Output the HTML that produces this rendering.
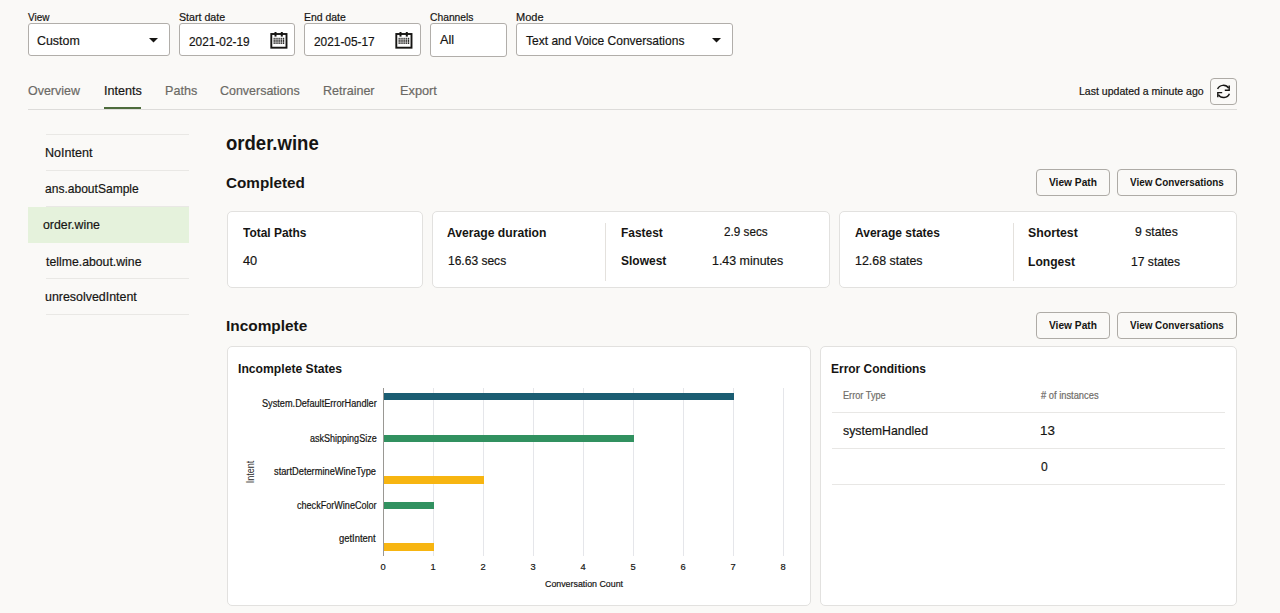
<!DOCTYPE html>
<html><head><meta charset="utf-8">
<style>
*{box-sizing:border-box;margin:0;padding:0}
html,body{width:1280px;height:613px;overflow:hidden;background:#faf9f7;font-family:"Liberation Sans",sans-serif;color:#161513}
.nt{position:absolute}
.t{position:absolute;white-space:nowrap;line-height:1;transform-origin:0 0}
.box{top:23px;height:33px;background:#fff;border:1px solid #b1aeaa;border-radius:3px}
.hr{height:1px;background:#e9e8e5}
.btn{height:27px;border:1px solid #aeaba6;border-radius:4px}
.card{background:#fff;border:1px solid #e2e1df;border-radius:5px}
.grid{top:388px;width:1px;height:168px;background:#e5e6ea}
</style></head><body>
<!-- filter bar -->
<div class="nt box" style="left:28px;width:142px"></div>
<svg class="nt" style="left:149px;top:38px" width="9" height="5"><path d="M0 0H9L4.5 4.5Z" fill="#161513"/></svg>
<div class="nt box" style="left:179px;width:116px"></div>
<div class="nt box" style="left:304px;width:117px"></div>
<div class="nt box" style="left:430px;width:77px;height:34px"></div>
<div class="nt box" style="left:516px;width:217px"></div>
<svg class="nt" style="left:712px;top:38px" width="9" height="5"><path d="M0 0H9L4.5 4.5Z" fill="#161513"/></svg>
<svg class="nt" style="left:270px;top:32px" width="18" height="18" viewBox="0 0 18 18"><rect x="1.3" y="2" width="15.2" height="13.7" fill="none" stroke="#161513" stroke-width="1.9"/><rect x="4.5" y="0" width="2" height="4.6" fill="#161513"/><rect x="10.8" y="0" width="2" height="4.6" fill="#161513"/><g fill="#161513"><rect x="3.60" y="5.8" width="1.1" height="6.2"/><rect x="5.50" y="5.8" width="1.1" height="6.2"/><rect x="7.40" y="5.8" width="1.1" height="6.2"/><rect x="9.30" y="5.8" width="1.1" height="6.2"/><rect x="11.20" y="5.8" width="1.1" height="6.2"/><rect x="13.10" y="5.8" width="1.1" height="6.2"/></g><g fill="#fff"><rect x="3" y="7.5" width="12" height="0.5" opacity="0.6"/><rect x="3" y="9.9" width="12" height="0.5" opacity="0.6"/></g></svg>
<svg class="nt" style="left:395px;top:32px" width="18" height="18" viewBox="0 0 18 18"><rect x="1.3" y="2" width="15.2" height="13.7" fill="none" stroke="#161513" stroke-width="1.9"/><rect x="4.5" y="0" width="2" height="4.6" fill="#161513"/><rect x="10.8" y="0" width="2" height="4.6" fill="#161513"/><g fill="#161513"><rect x="3.60" y="5.8" width="1.1" height="6.2"/><rect x="5.50" y="5.8" width="1.1" height="6.2"/><rect x="7.40" y="5.8" width="1.1" height="6.2"/><rect x="9.30" y="5.8" width="1.1" height="6.2"/><rect x="11.20" y="5.8" width="1.1" height="6.2"/><rect x="13.10" y="5.8" width="1.1" height="6.2"/></g><g fill="#fff"><rect x="3" y="7.5" width="12" height="0.5" opacity="0.6"/><rect x="3" y="9.9" width="12" height="0.5" opacity="0.6"/></g></svg>

<!-- tabs -->
<div class="nt" style="left:28px;top:109px;width:1209px;height:1px;background:#dddcda"></div>
<div class="nt" style="left:104px;top:107px;width:37px;height:2px;background:#4d6b3c"></div>
<div class="nt btn" style="left:1210px;top:78px;width:27px;height:27px"></div>
<svg class="nt" style="left:1216px;top:84px" width="15" height="15" viewBox="0 0 15 15"><g fill="none" stroke="#161513" stroke-width="1.4"><path d="M1.6 5.0A6 5.4 0 0 1 12.6 4.2"/><path d="M13.2 1.6V6.2H8.8"/><path d="M13.4 9.8A6 5.4 0 0 1 2.4 10.6"/><path d="M1.8 13.2V8.6H6.2"/></g></svg>

<!-- left list -->
<div class="nt hr" style="left:46px;top:134px;width:143px"></div>
<div class="nt hr" style="left:46px;top:170px;width:143px"></div>
<div class="nt hr" style="left:46px;top:206px;width:143px"></div>
<div class="nt" style="left:28px;top:207px;width:161px;height:36px;background:#e5f2dc"></div>
<div class="nt hr" style="left:46px;top:278px;width:143px"></div>
<div class="nt hr" style="left:46px;top:314px;width:143px"></div>

<!-- completed -->
<div class="nt btn" style="left:1036px;top:169px;width:74px"></div>
<div class="nt btn" style="left:1117px;top:169px;width:120px"></div>
<div class="nt card" style="left:227px;top:211px;width:196px;height:77px"></div>
<div class="nt card" style="left:432px;top:211px;width:398px;height:77px"></div>
<div class="nt card" style="left:839px;top:211px;width:398px;height:77px"></div>
<div class="nt" style="left:605px;top:223px;width:1px;height:58px;background:#e4e1dd"></div>
<div class="nt" style="left:1013px;top:223px;width:1px;height:58px;background:#e4e1dd"></div>

<!-- incomplete -->
<div class="nt btn" style="left:1036px;top:312px;width:74px"></div>
<div class="nt btn" style="left:1117px;top:312px;width:120px"></div>
<div class="nt card" style="left:227px;top:346px;width:584px;height:260px"></div>
<div class="nt card" style="left:820px;top:346px;width:417px;height:260px"></div>

<div class="nt grid" style="left:433px"></div>
<div class="nt grid" style="left:483px"></div>
<div class="nt grid" style="left:533px"></div>
<div class="nt grid" style="left:583px"></div>
<div class="nt grid" style="left:633px"></div>
<div class="nt grid" style="left:683px"></div>
<div class="nt grid" style="left:733px"></div>
<div class="nt grid" style="left:783px"></div>
<div class="nt" style="left:383px;top:388px;width:1px;height:168px;background:#9a9894"></div>
<div class="nt" style="left:384px;top:393px;width:350px;height:7px;background:#1b5d72"></div>
<div class="nt" style="left:384px;top:435px;width:250px;height:7px;background:#319160"></div>
<div class="nt" style="left:384px;top:476px;width:100px;height:8px;background:#f7b511"></div>
<div class="nt" style="left:384px;top:502px;width:50px;height:7px;background:#319160"></div>
<div class="nt" style="left:384px;top:543px;width:50px;height:8px;background:#f7b511"></div>
<div class="nt" style="left:234px;top:466px;width:34px;height:12px;font-size:10px;line-height:12px;text-align:center;color:#2b2a28;transform:rotate(-90deg) scaleX(0.9)">Intent</div>

<div class="nt" style="left:832px;top:412px;width:393px;height:1px;background:#e8e7e5"></div>
<div class="nt" style="left:832px;top:448px;width:393px;height:1px;background:#e8e7e5"></div>
<div class="nt" style="left:832px;top:484px;width:393px;height:1px;background:#e8e7e5"></div>

<div class="t" style="left:28.00px;top:12.00px;font-size:11px;-webkit-text-stroke:0.2px currentColor;transform:scaleX(0.9077);">View</div>
<div class="t" style="left:179.00px;top:12.00px;font-size:11px;-webkit-text-stroke:0.2px currentColor;transform:scaleX(0.9679);">Start date</div>
<div class="t" style="left:304.00px;top:12.00px;font-size:11px;-webkit-text-stroke:0.2px currentColor;transform:scaleX(0.9501);">End date</div>
<div class="t" style="left:430.00px;top:12.00px;font-size:11px;-webkit-text-stroke:0.2px currentColor;transform:scaleX(0.9362);">Channels</div>
<div class="t" style="left:516.00px;top:12.00px;font-size:11px;-webkit-text-stroke:0.2px currentColor;transform:scaleX(1.0014);">Mode</div>
<div class="t" style="left:37.00px;top:34.00px;font-size:13px;-webkit-text-stroke:0.2px currentColor;transform:scaleX(0.9537);">Custom</div>
<div class="t" style="left:189.00px;top:35.00px;font-size:13px;-webkit-text-stroke:0.2px currentColor;transform:scaleX(0.9132);">2021-02-19</div>
<div class="t" style="left:314.00px;top:35.00px;font-size:13px;-webkit-text-stroke:0.2px currentColor;transform:scaleX(0.9132);">2021-05-17</div>
<div class="t" style="left:440.00px;top:33.00px;font-size:13px;-webkit-text-stroke:0.2px currentColor;transform:scaleX(0.9736);">All</div>
<div class="t" style="left:526.00px;top:34.00px;font-size:13px;-webkit-text-stroke:0.2px currentColor;transform:scaleX(0.9248);">Text and Voice Conversations</div>
<div class="t" style="left:28.00px;top:84.00px;font-size:13px;-webkit-text-stroke:0.2px currentColor;color:#6b6965;transform:scaleX(0.9575);">Overview</div>
<div class="t" style="left:104.00px;top:84.00px;font-size:13px;-webkit-text-stroke:0.2px currentColor;transform:scaleX(0.9689);">Intents</div>
<div class="t" style="left:165.00px;top:84.00px;font-size:13px;-webkit-text-stroke:0.2px currentColor;color:#6b6965;transform:scaleX(0.9691);">Paths</div>
<div class="t" style="left:220.00px;top:84.00px;font-size:13px;-webkit-text-stroke:0.2px currentColor;color:#6b6965;transform:scaleX(0.9586);">Conversations</div>
<div class="t" style="left:323.00px;top:84.00px;font-size:13px;-webkit-text-stroke:0.2px currentColor;color:#6b6965;transform:scaleX(0.9638);">Retrainer</div>
<div class="t" style="left:400.00px;top:84.00px;font-size:13px;-webkit-text-stroke:0.2px currentColor;color:#6b6965;transform:scaleX(0.9819);">Export</div>
<div class="t" style="left:1079.00px;top:86.00px;font-size:11px;-webkit-text-stroke:0.2px currentColor;transform:scaleX(0.9568);">Last updated a minute ago</div>
<div class="t" style="left:45.00px;top:146.00px;font-size:13px;-webkit-text-stroke:0.2px currentColor;transform:scaleX(0.9641);">NoIntent</div>
<div class="t" style="left:45.00px;top:182.00px;font-size:13px;-webkit-text-stroke:0.2px currentColor;transform:scaleX(0.9264);">ans.aboutSample</div>
<div class="t" style="left:43.00px;top:218.00px;font-size:13px;-webkit-text-stroke:0.2px currentColor;transform:scaleX(0.9486);">order.wine</div>
<div class="t" style="left:46.00px;top:255.00px;font-size:13px;-webkit-text-stroke:0.2px currentColor;transform:scaleX(0.9435);">tellme.about.wine</div>
<div class="t" style="left:45.00px;top:290.00px;font-size:13px;-webkit-text-stroke:0.2px currentColor;transform:scaleX(0.9549);">unresolvedIntent</div>
<div class="t" style="left:226.00px;top:133.00px;font-size:20px;font-weight:700;transform:scaleX(0.9266);">order.wine</div>
<div class="t" style="left:226.00px;top:175.00px;font-size:15.5px;font-weight:700;transform:scaleX(0.9851);">Completed</div>
<div class="t" style="left:1049.00px;top:177.00px;font-size:10.5px;font-weight:700;transform:scaleX(0.9698);">View Path</div>
<div class="t" style="left:1130.00px;top:177.00px;font-size:10.5px;font-weight:700;transform:scaleX(0.9423);">View Conversations</div>
<div class="t" style="left:243.00px;top:226.00px;font-size:13px;font-weight:700;transform:scaleX(0.9186);">Total Paths</div>
<div class="t" style="left:243.00px;top:254.00px;font-size:13px;-webkit-text-stroke:0.2px currentColor;transform:scaleX(0.9827);">40</div>
<div class="t" style="left:447.00px;top:226.00px;font-size:13px;font-weight:700;transform:scaleX(0.9345);">Average duration</div>
<div class="t" style="left:448.00px;top:254.00px;font-size:13px;-webkit-text-stroke:0.2px currentColor;transform:scaleX(0.9248);">16.63 secs</div>
<div class="t" style="left:621.00px;top:226.00px;font-size:13px;font-weight:700;transform:scaleX(0.9169);">Fastest</div>
<div class="t" style="left:724.00px;top:225.00px;font-size:13px;-webkit-text-stroke:0.2px currentColor;transform:scaleX(0.9007);">2.9 secs</div>
<div class="t" style="left:621.00px;top:254.00px;font-size:13px;font-weight:700;transform:scaleX(0.9229);">Slowest</div>
<div class="t" style="left:712.00px;top:254.00px;font-size:13px;-webkit-text-stroke:0.2px currentColor;transform:scaleX(0.9554);">1.43 minutes</div>
<div class="t" style="left:855.00px;top:226.00px;font-size:13px;font-weight:700;transform:scaleX(0.9229);">Average states</div>
<div class="t" style="left:855.00px;top:254.00px;font-size:13px;-webkit-text-stroke:0.2px currentColor;transform:scaleX(0.9540);">12.68 states</div>
<div class="t" style="left:1028.00px;top:226.00px;font-size:13px;font-weight:700;transform:scaleX(0.9439);">Shortest</div>
<div class="t" style="left:1135.00px;top:225.00px;font-size:13px;-webkit-text-stroke:0.2px currentColor;transform:scaleX(0.9390);">9 states</div>
<div class="t" style="left:1028.00px;top:255.00px;font-size:13px;font-weight:700;transform:scaleX(0.9290);">Longest</div>
<div class="t" style="left:1131.00px;top:255.00px;font-size:13px;-webkit-text-stroke:0.2px currentColor;transform:scaleX(0.9311);">17 states</div>
<div class="t" style="left:226.00px;top:318.00px;font-size:15.5px;font-weight:700;transform:scaleX(0.9937);">Incomplete</div>
<div class="t" style="left:1049.00px;top:320.00px;font-size:10.5px;font-weight:700;transform:scaleX(0.9698);">View Path</div>
<div class="t" style="left:1130.00px;top:320.00px;font-size:10.5px;font-weight:700;transform:scaleX(0.9423);">View Conversations</div>
<div class="t" style="left:238.00px;top:363.00px;font-size:12.5px;font-weight:700;transform:scaleX(0.9732);">Incomplete States</div>
<div class="t" style="left:831.00px;top:363.00px;font-size:12.5px;font-weight:700;transform:scaleX(0.9566);">Error Conditions</div>
<div class="t" style="left:843.00px;top:391.00px;font-size:10px;-webkit-text-stroke:0.2px currentColor;color:#6f6d69;transform:scaleX(0.9183);">Error Type</div>
<div class="t" style="left:1041.00px;top:391.00px;font-size:10px;-webkit-text-stroke:0.2px currentColor;color:#6f6d69;transform:scaleX(0.9333);"># of instances</div>
<div class="t" style="left:843.00px;top:424.00px;font-size:13px;-webkit-text-stroke:0.2px currentColor;transform:scaleX(0.9486);">systemHandled</div>
<div class="t" style="left:1040.00px;top:424.00px;font-size:13px;-webkit-text-stroke:0.2px currentColor;transform:scaleX(1.0282);">13</div>
<div class="t" style="left:1041.00px;top:460.00px;font-size:13px;-webkit-text-stroke:0.2px currentColor;transform:scaleX(0.9300);">0</div>
<div class="t" style="left:262.00px;top:399.00px;font-size:10px;-webkit-text-stroke:0.2px currentColor;transform:scaleX(0.9172);">System.DefaultErrorHandler</div>
<div class="t" style="left:310.00px;top:434.00px;font-size:10px;-webkit-text-stroke:0.2px currentColor;transform:scaleX(0.9018);">askShippingSize</div>
<div class="t" style="left:274.00px;top:467.00px;font-size:10px;-webkit-text-stroke:0.2px currentColor;transform:scaleX(0.9271);">startDetermineWineType</div>
<div class="t" style="left:297.00px;top:501.00px;font-size:10px;-webkit-text-stroke:0.2px currentColor;transform:scaleX(0.9063);">checkForWineColor</div>
<div class="t" style="left:339.00px;top:534.00px;font-size:10px;-webkit-text-stroke:0.2px currentColor;transform:scaleX(0.9423);">getIntent</div>
<div class="t" style="left:545.00px;top:579.00px;font-size:9.5px;-webkit-text-stroke:0.2px currentColor;transform:scaleX(0.9294);">Conversation Count</div>
<div class="t" style="left:373.00px;top:563.00px;font-size:9.3px;-webkit-text-stroke:0.2px currentColor;width:20px;text-align:center;">0</div>
<div class="t" style="left:423.00px;top:563.00px;font-size:9.3px;-webkit-text-stroke:0.2px currentColor;width:20px;text-align:center;">1</div>
<div class="t" style="left:473.00px;top:563.00px;font-size:9.3px;-webkit-text-stroke:0.2px currentColor;width:20px;text-align:center;">2</div>
<div class="t" style="left:523.00px;top:563.00px;font-size:9.3px;-webkit-text-stroke:0.2px currentColor;width:20px;text-align:center;">3</div>
<div class="t" style="left:573.00px;top:563.00px;font-size:9.3px;-webkit-text-stroke:0.2px currentColor;width:20px;text-align:center;">4</div>
<div class="t" style="left:623.00px;top:563.00px;font-size:9.3px;-webkit-text-stroke:0.2px currentColor;width:20px;text-align:center;">5</div>
<div class="t" style="left:673.00px;top:563.00px;font-size:9.3px;-webkit-text-stroke:0.2px currentColor;width:20px;text-align:center;">6</div>
<div class="t" style="left:723.00px;top:563.00px;font-size:9.3px;-webkit-text-stroke:0.2px currentColor;width:20px;text-align:center;">7</div>
<div class="t" style="left:773.00px;top:563.00px;font-size:9.3px;-webkit-text-stroke:0.2px currentColor;width:20px;text-align:center;">8</div>
</body></html>
